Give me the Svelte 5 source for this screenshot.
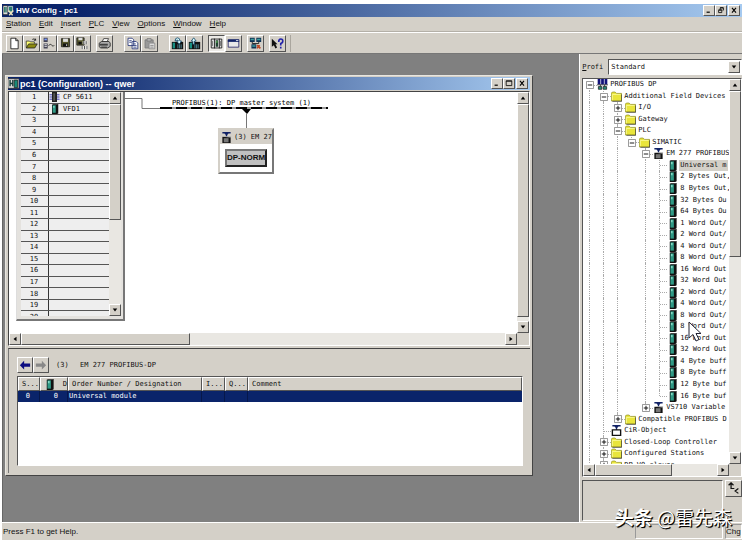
<script lang="ts">
  type Node = { label: string; depth: number; icon: string; state?: string };

  const menus = ['Station', 'Edit', 'Insert', 'PLC', 'View', 'Options', 'Window', 'Help'];

  const tools = [
    { wide: false, items: ['new', 'open', 'online', 'save', 'compile'] },
    { wide: false, items: ['print'] },
    { wide: true, items: ['copy', 'paste'] },
    { wide: true, items: ['download', 'upload'] },
    { wide: false, items: ['catalog', 'window'] },
    { wide: false, items: ['network'] },
    { wide: false, items: ['help'] }
  ];

  const slots = Array.from({ length: 20 }, (_, i) => ({ no: i + 1, name: '' }));
  slots[0].name = 'CP 5611';
  slots[1].name = 'VFD1';

  const modules = [
    'Universal m', '2 Bytes Out,', '8 Bytes Out,', '32 Bytes Ou', '64 Bytes Ou',
    '1 Word Out/', '2 Word Out/', '4 Word Out/', '8 Word Out/', '16 Word Out',
    '32 Word Out', '2 Word Out/', '4 Word Out/', '8 Word Out/', '8 Word Out/',
    '16 Word Out', '32 Word Out', '4 Byte buff', '8 Byte buff', '12 Byte buf', '16 Byte buf'
  ];

  const nodes: Node[] = [
    { label: 'PROFIBUS DP', depth: 0, icon: 'profibus', state: 'open' },
    { label: 'Additional Field Devices', depth: 1, icon: 'folder', state: 'open' },
    { label: 'I/O', depth: 2, icon: 'folder', state: 'closed' },
    { label: 'Gateway', depth: 2, icon: 'folder', state: 'closed' },
    { label: 'PLC', depth: 2, icon: 'folder', state: 'open' },
    { label: 'SIMATIC', depth: 3, icon: 'folder', state: 'open' },
    { label: 'EM 277 PROFIBUS', depth: 4, icon: 'slave', state: 'open' },
    ...modules.map((label) => ({ label, depth: 5, icon: 'module' })),
    { label: 'VS710 Variable', depth: 4, icon: 'slave', state: 'closed' },
    { label: 'Compatible PROFIBUS D', depth: 2, icon: 'folder', state: 'closed' },
    { label: 'CiR-Object', depth: 1, icon: 'cir' },
    { label: 'Closed-Loop Controller', depth: 1, icon: 'folder', state: 'closed' },
    { label: 'Configured Stations', depth: 1, icon: 'folder', state: 'closed' },
    { label: 'DP V0 slaves', depth: 1, icon: 'folder', state: 'closed' }
  ];

  // does the line at this level go on below the row?
  function continues(index: number, level: number) {
    if (level < 2) return true;
    for (let i = index + 1; i < nodes.length; i++) {
      if (nodes[i].depth < level) return false;
      if (nodes[i].depth === level) return true;
    }
    return false;
  }

  let profile = $state('Standard');
  let selected = $state(7);
</script>

{#snippet arrow(dir: string)}
  <svg class="arrow" viewBox="0 0 8 8">
    {#if dir === 'up'}<path d="M1 6h6L4 2z" />{/if}
    {#if dir === 'down'}<path d="M1 2h6L4 6z" />{/if}
    {#if dir === 'left'}<path d="M6 1v6L2 4z" />{/if}
    {#if dir === 'right'}<path d="M2 1v6l4-3z" />{/if}
  </svg>
{/snippet}

{#snippet scrollbar(vertical: boolean, thumb: number)}
  <div class="scroll" class:vertical>
    <button class="raised" aria-label="Scroll back">{@render arrow(vertical ? 'up' : 'left')}</button>
    <div class="track">
      <div class="thumb raised" style:flex-basis="{thumb}%"></div>
    </div>
    <button class="raised" aria-label="Scroll forward">{@render arrow(vertical ? 'down' : 'right')}</button>
  </div>
{/snippet}

{#snippet controls(kind: string)}
  <div class="controls">
    <button class="raised" aria-label="Minimize"><svg viewBox="0 0 10 8"><path d="M2 6.5h4" stroke="#000" stroke-width="1.5" /></svg></button>
    <button class="raised" aria-label="Restore">
      <svg viewBox="0 0 10 8" fill="none" stroke="#000">
        {#if kind === 'app'}
          <path d="M4 3V1h4v3H7M2 4h4v3H2zM4 1h4M2 3.5h4" />
        {:else}
          <path d="M1.5 1v6h7V1zM1.5 1.5h7" />
        {/if}
      </svg>
    </button>
    <button class="raised close" aria-label="Close"><svg viewBox="0 0 10 8"><path d="M2.5 1l5 6m0-6l-5 6" stroke="#000" stroke-width="1.4" /></svg></button>
  </div>
{/snippet}

{#snippet icon(name: string)}
  <svg class="icon" viewBox="0 0 16 16">
    {#if name === 'new'}
      <path d="M3.5 1.5h6l3 3v10h-9z" fill="#fff" stroke="#111" /><path d="M9.5 1.5v3h3" fill="none" stroke="#111" />
    {:else if name === 'open'}
      <path d="M1.5 13V5h4l1 1h5v2" fill="#ffff70" stroke="#333" /><path d="M1.5 13.5l3-5h10.500l-3 5z" fill="#8c8a10" stroke="#222" /><path d="M9 3q3-2 4 1m0-2v2h-2" fill="none" stroke="#111" />
    {:else if name === 'online'}
      <path d="M2 1h5v5H2zM2 8h5v6H2z" fill="#445" /><path d="M3 2h3v2H3z" fill="#79f" /><path d="M3 9h3v1H3zM3 11h3v1H3z" fill="#eee" /><path d="M8 11q2-4 4-1t3 0" fill="none" stroke="#222" />
    {:else if name === 'save'}
      <path d="M3 2h10v10H3z" fill="#54542a" stroke="#222" /><path d="M5 2h6v4H5z" fill="#ddd" /><path d="M5 8h6v4H5z" fill="#111" /><path d="M9 9h1v2H9z" fill="#fff" />
    {:else if name === 'compile'}
      <path d="M1 1h9v9H1z" fill="#54542a" stroke="#222" /><path d="M3 1h5v3H3z" fill="#ddd" /><path d="M3 6h4v3H3z" fill="#111" /><path d="M9.5 5v4m3-4v4m-5 2v4m3-4v4m3-4v4" stroke="#fff" stroke-width="2.5" /><path d="M9.5 5v4m3-4v4m-5 2v4m3-4v4m3-4v4" stroke="#222" />
    {:else if name === 'print'}
      <path d="M5 6l2-4h6l-2 4z" fill="#fff" stroke="#333" /><path d="M1.500 7.500l3-2h9l1.500 2v4l-3 2h-9l-1.500-2z" fill="#aaa" stroke="#222" /><path d="M2 8h10v3H2z" fill="#777" /><path d="M2 9.500h10M4 12.500h7" stroke="#222" />
    {:else if name === 'copy'}
      <path d="M2.5 1.5h5l2 2v7h-7zM7.5 5.5h5l2 2v7h-7z" fill="#fff" stroke="#237" /><path d="M4 4.5h3M4 6.5h3M9 8.5h3M9 10.5h4M9 12.5h4" stroke="#237" />
    {:else if name === 'paste'}
      <path d="M2.5 3.5h10v10h-10z" fill="#999" stroke="#777" /><path d="M5 2h5v3H5z" fill="#bbb" stroke="#777" /><path d="M7.5 7.5h7v7h-7z" fill="#ddd" stroke="#888" /><path d="M9 10.5h4M9 12.5h4" stroke="#888" />
    {:else if name === 'download' || name === 'upload'}
      <path d="M1 6h14v9H1z" fill="#111" /><path d="M2 7h3v7H2z" fill="#178f82" /><path d="M8.5 9v5M10.5 9v5M12.5 9v5" stroke="#59a" />
      {#if name === 'download'}
        <path d="M5 5q0-4 3-4t3 4h2L10 9 7 5h2q0-2-2-1z" fill="#dff" stroke="#146" />
      {:else}
        <path d="M4 5l3-4 3 4H8v4H6V5z" fill="#dff" stroke="#146" />
      {/if}
    {:else if name === 'catalog'}
      <path d="M1.5 2.5h13v11h-13z" fill="#ddd" stroke="#111" /><path d="M5.5 2v12M11.5 2v12" stroke="#111" /><path d="M7 4h3v8H7z" fill="#243" /><path d="M3 5v6M13 5v6" stroke="#666" /><path d="M8 5h1v2H8z" fill="#7e6" />
    {:else if name === 'window'}
      <path d="M1.5 3.5h13v9h-13z" fill="#e8e8e8" stroke="#226" /><path d="M1 3h14v3H1z" fill="#126" /><path d="M11 4h3v1h-3z" fill="#fff" />
    {:else if name === 'network'}
      <path d="M1 1h6v5H1zM9 1h6v5H9zM3 9h6v5H3z" fill="#135" /><path d="M2 2h4v2H2zM10 2h4v2h-4zM4 10h4v2H4z" fill="#3ba0a0" /><path d="M4 6v2h8V6M6 8v1" fill="none" stroke="#111" /><path d="M10 10l4 4m-4 0l3-4" stroke="#b42" stroke-width="2" />
    {:else if name === 'help'}
      <path d="M1 2v10l2.5-2 2 4 2-1-2-4H8z" fill="#111" /><path d="M9.5 6q0-3.5 2.500-3.500t2.500 2.500-2.500 3v2.500M12 12v2" fill="none" stroke="#22a" stroke-width="2" />
    {:else if name === 'folder'}
      <path d="M.5 14.500V3l1.500-1.500h4l2 2h7.500v11z" fill="#e9e53c" stroke="#8b8920" /><path d="M2 5h12M2 5v8" fill="none" stroke="#ffffb0" /><path d="M15.5 5v10H2" fill="none" stroke="#333" />
    {:else if name === 'profibus'}
      <path d="M1 0h4v8H1zM6 0h4v8H6zM11 0h4v8h-4z" fill="#12127a" /><path d="M0 8.5h16M5 8v3M11 8v3" stroke="#111" /><path d="M2 11h5v4H2zM9 11h5v4H9z" fill="#2a8d7b" stroke="#111" />
    {:else if name === 'slave' || name === 'cir'}
      <path d="M2 0h12v2h-3L8 5 5 2H2z" fill="#126" /><path d="M8 2v6" stroke="#126" stroke-width="2" />
      {#if name === 'slave'}
        <path d="M2 7h12v9H2z" fill="#111" /><path d="M4 9h7v6H4z" fill="#777" /><path d="M2 7l2-1h11l-1 2z" fill="#bbb" />
      {:else}
        <path d="M2 7h12v8H2z" fill="#fff" stroke="#111" stroke-width="2" />
      {/if}
    {:else if name === 'module'}
      <path d="M4 1l2-1h8v15l-2 1H4z" fill="#111" /><path d="M5 2h5v12H5z" fill="#2f9a86" /><path d="M6 3h2v3H6z" fill="#8fe0cc" /><path d="M5 0h8" stroke="#aaa" />
    {:else if name === 'cp'}
      <path d="M0 4.5h5M0 8h5M0 11.5h5M11 4.5h5M11 8h5M11 11.5h5" stroke="#3434b0" stroke-width="1.5" /><path d="M4 0h8v16H4z" fill="#222" /><path d="M6 2h3v12H6z" fill="#555" />
    {:else if name === 'app'}
      <path d="M0 1h7v13H0z" fill="#ddd" stroke="#222" /><path d="M2.5 3v8M4.5 3v8" stroke="#165" stroke-width="1.5" /><path d="M8 2h6v8H8z" fill="#2b7e70" stroke="#eee" /><path d="M8 8l6 7M15 8l-6 7" stroke="#f0e8c0" stroke-width="2" />
    {:else if name === 'doc'}
      <path d="M0 1h16v14H0z" fill="#ddd" stroke="#222" /><path d="M3 3v9M7 3v9M3 8h4" stroke="#173f3a" stroke-width="2" /><path d="M9 3h5v11H9z" fill="#188a78" stroke="#111" />
    {/if}
  </svg>
{/snippet}

<div class="app">
  <header class="titlebar">
    {@render icon('app')}
    <h1>HW Config - pc1</h1>
    {@render controls('app')}
  </header>

  <nav class="menubar">
    {#each menus as menu}
      <button><u>{menu[0]}</u>{menu.slice(1)}</button>
    {/each}
  </nav>

  <div class="toolbar">
    {#each tools as group}
      <div class="group" class:wide={group.wide}>
        {#each group.items as item}
          <button class="raised" class:pressed={item === 'catalog'} aria-label={item}>{@render icon(item)}</button>
        {/each}
      </div>
    {/each}
  </div>

  <div class="body">
    <main class="desktop">
      <section class="child">
        <header class="titlebar">
          {@render icon('doc')}
          <h2>pc1 (Configuration) -- qwer</h2>
          {@render controls('child')}
        </header>

        <div class="station">
          <div class="canvas">
            <svg class="bus" width="400" height="160">
              <path d="M115 6.5h18v10h18" fill="none" stroke="#777" />
              <path d="M151 16h168" stroke="#000" stroke-width="2" />
              <path d="M163 16h156" stroke="#999" stroke-width="2" stroke-dasharray="4 11" />
              <path d="M233 17h9l-4 5z" fill="#000" />
              <path d="M237.5 21v16" stroke="#777" />
              <text x="163" y="13">PROFIBUS(1): DP master system (1)</text>
            </svg>

            <div class="slave">
              <div class="caption">{@render icon('slave')}<span>(3) EM 27</span></div>
              <button class="raised">DP-NORM</button>
            </div>

            <div class="rack">
              <div class="slots">
                <table>
                  <tbody>
                    {#each slots as slot}
                      <tr>
                        <th scope="row">{slot.no}</th>
                        <td>
                          {#if slot.name}
                            <span class="slot">{@render icon(slot.no === 1 ? 'cp' : 'module')}{slot.name}</span>
                          {/if}
                        </td>
                      </tr>
                    {/each}
                  </tbody>
                </table>
              </div>
              {@render scrollbar(true, 58)}
            </div>
          </div>
          {@render scrollbar(true, 98)}
          {@render scrollbar(false, 35)}
        </div>

        <div class="detail">
          <div class="path">
            <button class="raised" aria-label="Back"><svg viewBox="0 0 14 12"><path d="M1 6l5-5v3h7v4H6v3z" fill="#0c0c80" /></svg></button>
            <button class="raised" aria-label="Forward"><svg viewBox="0 0 14 12"><path d="M13 6L8 1v3H1v4h7v3z" fill="#888" /></svg></button>
            <span class="address">(3)</span>
            <span>EM 277 PROFIBUS-DP</span>
          </div>
          <div class="list">
            <table>
              <thead>
                <tr>
                  <th class="c-slot">S...</th>
                  <th class="c-id"><span>{@render icon('module')}D</span></th>
                  <th class="c-order">Order Number / Designation</th>
                  <th class="c-io">I...</th>
                  <th class="c-io">Q...</th>
                  <th>Comment</th>
                </tr>
              </thead>
              <tbody>
                <tr><td class="num">0</td><td class="num">0</td><td>Universal module</td><td></td><td></td><td></td></tr>
              </tbody>
            </table>
          </div>
        </div>
      </section>
    </main>

    <aside>
      <div class="profile">
        <label for="profile"><u>P</u>rofi</label>
        <div class="combo">
          <select id="profile" bind:value={profile}>
            <option>Standard</option>
          </select>
          <span class="drop raised">{@render arrow('down')}</span>
        </div>
      </div>

      <div class="tree">
        <ul>
          {#each nodes as node, i}
            <li>
              {#each { length: node.depth } as _, level}
                <span class="guide" class:line={continues(i, level)}></span>
              {/each}
              <span class="guide line branch" class:last={!continues(i, node.depth)} class:first={i === 0}>
                {#if node.state}
                  <svg class="expander" viewBox="0 0 9 9">
                    <path d="M.5.5h8v8h-8z" fill="#fff" stroke="#888" />
                    <path d={node.state === 'open' ? 'M2 4.5h5' : 'M2 4.5h5M4.5 2v5'} stroke="#000" />
                  </svg>
                {/if}
              </span>
              {@render icon(node.icon)}
              <button class:selected={selected === i} onclick={() => (selected = i)}>{node.label}</button>
            </li>
          {/each}
        </ul>
        {@render scrollbar(true, 46)}
        {@render scrollbar(false, 63)}
      </div>

      <div class="info">
        <div class="description"></div>
        <button class="raised" aria-label="Hide description">
          <svg viewBox="0 0 16 16" fill="none" stroke="#111" stroke-width="1.5"><path d="M5 1v7h4M2 4l3-3 3 3M14 8l-4 3 4 3" /></svg>
        </button>
      </div>
    </aside>
  </div>

  <footer>
    <span>Press F1 to get Help.</span>
    <span class="cell"></span>
    <span class="cell mode">Chg</span>
  </footer>

  <svg class="cursor" viewBox="0 0 14 21"><path d="M1 1v16l4-3.5 3 6.500 3-1.500-3-6h5z" fill="#fff" stroke="#223" /></svg>
  <div class="watermark"><b>头条</b> @雷先森</div>
</div>

<style>
  :global(body) {
    background: #fff;
  }

  .app {
    box-sizing: border-box;
    position: relative;
    display: flex;
    flex-direction: column;
    height: 100vh;
    padding: 4px 6px 3px 2px;
    overflow: hidden;
    color: #111;
    font: 8px/12px 'Liberation Sans', Arial, sans-serif;
    white-space: nowrap;
  }

  .app > * {
    flex-shrink: 0;
  }

  button {
    padding: 0;
    border: 0;
    background: none;
    color: inherit;
    font: inherit;
  }

  svg {
    display: block;
  }

  .raised {
    box-sizing: border-box;
    border: 1px solid;
    border-color: #fff #555 #555 #fff;
    background: #d4d0c8;
  }

  .icon {
    flex: none;
    width: 11px;
    height: 11px;
  }

  h1, h2 {
    flex: 1;
    margin: 0;
    font-size: 8px;
  }

  h2 {
    font-size: 9px;
  }

  .titlebar {
    display: flex;
    align-items: center;
    gap: 2px;
    height: 13px;
    padding: 0 2px 0 1px;
    background: linear-gradient(90deg, #0a246a 10%, #a6caf0);
    color: #fff;
  }

  .child .titlebar {
    gap: 1px;
    padding-left: 0;
  }

  .controls {
    display: flex;
  }

  .controls button {
    width: 12px;
    height: 11px;
    padding: 1px;
  }

  .controls .close {
    margin-left: 1px;
  }

  .menubar {
    display: flex;
    gap: 8px;
    height: 14px;
    padding-left: 4px;
    background: #d4d0c8;
    border-bottom: 1px solid #b4b0a8;
  }

  .toolbar {
    display: flex;
    align-items: center;
    gap: 5px;
    height: 20px;
    padding-left: 4px;
    background: #d4d0c8;
    border-top: 1px solid #fff;
    border-bottom: 1px solid #777;
  }

  .group {
    display: flex;
  }

  .group.wide {
    margin-left: 6px;
  }

  .group button {
    width: 17px;
    height: 17px;
    padding: 1px;
  }

  .group .icon {
    width: 13px;
    height: 13px;
  }

  .group .pressed {
    border-color: #555 #fff #fff #555;
    background: #eceae6;
  }

  .group:last-child {
    padding-right: 4px;
    border-right: 1px solid #aaa69e;
  }

  .body {
    display: flex;
    flex: 1 1 0;
    min-height: 0;
  }

  .desktop {
    position: relative;
    flex: 1;
    border-left: 1px solid #666;
    background: #808080;
  }

  /* child window */
  .child {
    position: absolute;
    inset: 21px 46px 46px 2px;
    display: flex;
    flex-direction: column;
    padding: 1px 2px 2px;
    border: 1px solid;
    border-color: #e8e6e0 #444 #444 #e8e6e0;
    background: #d4d0c8;
  }

  .station {
    flex: 7 1 0;
    display: grid;
    grid-template: minmax(0, 1fr) 12px / minmax(0, 1fr) 12px;
    margin-top: 1px;
    border: 1px solid;
    border-color: #444 #fff #fff #444;
  }

  .canvas {
    position: relative;
    overflow: hidden;
    background: #fff;
  }

  .canvas, .detail, aside {
    font: 7px/12px 'DejaVu Sans Mono', monospace;
  }

  .bus {
    position: absolute;
    left: 0;
    top: 0;
  }

  .slave {
    position: absolute;
    left: 209px;
    top: 36px;
    width: 52px;
    height: 42px;
    border: 2px solid;
    border-color: #d4d0c8 #777 #777 #d4d0c8;
    background: #fff;
    text-align: center;
  }

  .caption {
    display: flex;
    align-items: center;
    gap: 2px;
    height: 14px;
    margin-bottom: 5px;
    padding-left: 1px;
    background: #d4d0c8;
  }

  .slave button {
    width: 42px;
    height: 18px;
    border: 2px solid;
    border-color: #777 #222 #222 #777;
    background: #c0c0c0;
    font: bold 8px/12px 'Liberation Sans', Arial, sans-serif;
  }

  .rack {
    position: absolute;
    left: 7px;
    top: 0;
    display: flex;
    height: 224px;
    padding: 0 2px 3px 4px;
    border: 2px solid #777;
    border-top: 0;
    border-left: 1px solid #ddd;
    background: #e4e2de;
  }

  .slots {
    width: 88px;
    overflow: hidden;
    background: #eee;
  }

  .slots table {
    width: 100%;
    height: 231px;
    border-collapse: collapse;
  }

  .slots th, .slots td {
    height: 10px;
    padding: 0;
    border-bottom: 1px solid #555;
    font-weight: normal;
    line-height: 10px;
  }

  .slots th {
    width: 26px;
    border-right: 1px solid #333;
    padding-right: 1px;
  }

  .slot {
    display: flex;
    align-items: center;
    gap: 3px;
  }

  .slot .icon {
    height: 10px;
  }

  /* scrollbars */
  .scroll {
    display: flex;
    min-width: 0;
    min-height: 0;
  }

  .scroll.vertical {
    flex-direction: column;
    width: 12px;
  }

  .scroll button {
    flex: none;
    display: grid;
    place-items: center;
    width: 12px;
    height: 12px;
  }

  .arrow {
    width: 6px;
    height: 6px;
  }

  .track {
    flex: 1;
    display: flex;
    flex-direction: inherit;
    min-height: 0;
    background: #e9e7e2;
  }

  /* module list */
  .detail {
    flex: 3 1 0;
    display: flex;
    flex-direction: column;
    margin-top: 2px;
    padding: 8px 7px 7px 8px;
    border-top: 1px solid #444;
    border-left: 1px solid #777;
  }

  .path {
    display: flex;
    align-items: center;
    margin-bottom: 3px;
  }

  .path button {
    width: 16px;
    height: 16px;
    padding: 1px;
  }

  .address {
    width: 24px;
    margin-left: 7px;
  }

  .list {
    flex: 1;
    border: 1px solid;
    border-color: #555 #fff #fff #555;
    background: #fff;
  }

  .list table {
    width: 100%;
    border-spacing: 0;
    table-layout: fixed;
  }

  .list th {
    height: 11px;
    padding: 0 0 0 3px;
    border: 1px solid;
    border-color: #fff #555 #555 #fff;
    background: #d4d0c8;
    font-weight: normal;
    text-align: left;
  }

  .list th span {
    display: flex;
    align-items: center;
    justify-content: space-between;
  }

  .c-slot { width: 17px; }
  .c-id { width: 23px; }
  .c-order { width: 129px; }
  .c-io { width: 18px; }

  .list td {
    height: 11px;
    padding: 0 0 0 1px;
    background: #0a246a;
    color: #fff;
    line-height: 11px;
  }

  .list td:not(:last-child) {
    border-right: 1px solid #06184a;
  }

  .list .num {
    padding-right: 9px;
    text-align: right;
  }

  /* hardware catalog */
  aside {
    display: flex;
    flex-direction: column;
    gap: 3px;
    width: 22%;
    padding: 5px 0 1px 2px;
    box-sizing: border-box;
    border-left: 1px solid #fff;
    background: #d4d0c8;
  }

  .profile {
    display: flex;
    align-items: center;
    gap: 5px;
  }

  .combo {
    position: relative;
    flex: 1;
    display: flex;
    border: 1px solid;
    border-color: #555 #fff #fff #555;
  }

  select {
    flex: 1;
    height: 14px;
    padding: 0 2px;
    appearance: none;
    border: 0;
    border-radius: 0;
    background: #fff;
    color: inherit;
    font: inherit;
  }

  .drop {
    position: absolute;
    inset: 1px 1px 1px auto;
    display: grid;
    place-items: center;
    width: 12px;
    pointer-events: none;
  }

  .tree {
    flex: 1;
    display: grid;
    grid-template: minmax(0, 1fr) 12px / minmax(0, 1fr) 12px;
    min-height: 0;
    border: 1px solid;
    border-color: #555 #fff #fff #555;
    overflow: hidden;
  }

  .tree > .scroll {
    position: relative;
    z-index: 1;
    background: #d4d0c8;
  }

  ul {
    display: grid;
    grid-auto-rows: 1fr;
    height: 392px;
    margin: 0;
    padding: 0;
    list-style: none;
    background: #fff;
    overflow: hidden;
  }

  li {
    display: flex;
    align-items: center;
    min-width: 0;
    min-height: 0;
    overflow: hidden;
  }

  li button {
    margin-left: 1px;
    padding: 0 1px;
    line-height: 11px;
  }

  li .selected {
    background: #d4d0c8;
  }

  .guide {
    position: relative;
    flex: none;
    align-self: stretch;
    width: 14px;
  }

  .guide.line::before {
    content: '';
    position: absolute;
    inset: 0 auto 0 6px;
    border-left: 1px dotted #aaa;
  }

  .guide.last::before {
    bottom: 50%;
  }

  .guide.first::before {
    top: 50%;
  }

  .branch::after {
    content: '';
    position: absolute;
    inset: 50% 0 auto 7px;
    border-top: 1px dotted #aaa;
  }

  .expander {
    position: absolute;
    z-index: 1;
    left: 3px;
    top: 2px;
    width: 8px;
    height: 8px;
  }

  .info {
    display: flex;
    gap: 2px;
    height: 41px;
  }

  .description {
    flex: 1;
    border: 1px solid;
    border-color: #555 #fff #fff #555;
  }

  .info button {
    width: 17px;
    height: 17px;
    padding: 1px;
  }

  footer {
    display: flex;
    gap: 2px;
    height: 15px;
    padding: 1px 0 1px 1px;
    border-top: 1px solid #fff;
    background: #d4d0c8;
    line-height: 15px;
  }

  footer span:first-child {
    flex: 1;
  }

  .cell {
    box-sizing: border-box;
    width: 88px;
    border: 1px solid;
    border-color: #999 #fff #fff #999;
    line-height: 13px;
  }

  .mode {
    width: 17px;
  }

  .cursor {
    position: absolute;
    left: 688px;
    top: 321px;
    width: 14px;
    height: 21px;
  }

  .watermark {
    position: absolute;
    right: 16px;
    bottom: 14px;
    color: #fff;
    font: 19px/24px 'Noto Sans CJK SC', sans-serif;
    text-shadow: 1px 1px 1px #000, 1px 1px 0 #222;
  }
</style>
